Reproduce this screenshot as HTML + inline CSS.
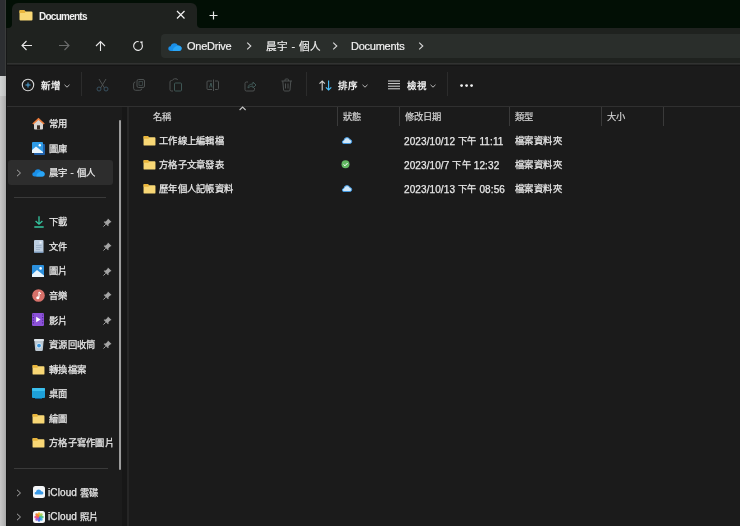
<!DOCTYPE html>
<html lang="zh-TW">
<head>
<meta charset="utf-8">
<style>
*{margin:0;padding:0;box-sizing:border-box}
html,body{-webkit-font-smoothing:antialiased;width:740px;height:526px;overflow:hidden;background:#1b1b1b;font-family:"Liberation Sans",sans-serif;color:#fff}
.a{position:absolute}
svg{position:absolute;overflow:visible}
.t{position:absolute;white-space:nowrap;line-height:20px;will-change:transform}
#strip{left:0;top:76px;width:6px;height:450px;background:linear-gradient(to right,#c8c8c8,#b4b4b4 70%,#a6a6a6)}
#striphi{left:0;top:76px;width:6px;height:20px;background:linear-gradient(to right,#d2d4d4,#c4c6c6 70%,#b8b8b8)}
#striptop{left:0;top:0;width:5px;height:76px;background:#2c2e31}
#striptopline{left:5px;top:0;width:1px;height:76px;background:#3a3c3b}
#border{left:6px;top:0;width:1px;height:526px;background:#161717}
#title{left:6px;top:0;width:734px;height:28px;background:#020f05}
#nav{left:7px;top:28px;width:733px;height:36px;background:#1f221f}
#tab{left:12px;top:3px;width:185px;height:26px;background:#1f221f;border-radius:6px 6px 0 0}
#addr{left:161px;top:34px;width:600px;height:24px;background:#2a2e2b;border-radius:4px}
#navline{left:7px;top:63px;width:733px;height:3px;background:linear-gradient(#313231 0,#313231 33%,#262726 33%,#262726 66%,#151515 66%)}
#tool{left:7px;top:66px;width:733px;height:40px;background:#1b1b1b}
#toolline{left:7px;top:106px;width:733px;height:1px;background:#303030}
#side{left:7px;top:107px;width:120px;height:419px;background:#1c1c1c}
#sideline{left:127px;top:107px;width:2px;height:419px;background:#262626}
#sidedark{left:122px;top:107px;width:5px;height:419px;background:#171717}
.sep{position:absolute;width:1px;top:72px;height:24px;background:#2c2c2c}
.col{position:absolute;top:107px;width:1px;height:19px;background:#3a3a3a}
.hd{color:#d4d4d4;font-size:9.3px;font-weight:500;-webkit-text-stroke:0.2px #d4d4d4}
.row{letter-spacing:0.3px;color:#e8e8e8;font-size:9.3px;font-weight:500;-webkit-text-stroke:0.25px #e8e8e8}
.num{font-size:10px;letter-spacing:0.1px}
.row .num{position:relative;top:1px}
.sb{letter-spacing:0.3px;color:#e8e8e8;font-size:9.3px;font-weight:500;-webkit-text-stroke:0.25px #e8e8e8}
.tb{color:#f0f0f0;font-size:9.5px;font-weight:bold}
.ad{color:#f0f0f0;font-size:11px;letter-spacing:-0.25px;-webkit-text-stroke:0.2px #f0f0f0}
</style>
</head>
<body>
<div class="a" id="strip"></div>
<div class="a" id="striphi"></div>
<div class="a" id="striptop"></div>
<div class="a" id="striptopline"></div>
<div class="a" id="border"></div>
<div class="a" id="title"></div>
<div class="a" id="nav"></div>
<div class="a" id="tab"></div>
<!-- tab flares -->
<svg style="left:8px;top:24px" width="4" height="4"><path d="M4 0 L4 4 L0 4 A4 4 0 0 0 4 0Z" fill="#1f221f"/></svg>
<svg style="left:197px;top:24px" width="4" height="4"><path d="M0 0 L0 4 L4 4 A4 4 0 0 1 0 0Z" fill="#1f221f"/></svg>
<div class="a" id="addr"></div>
<div class="a" id="navline"></div>
<div class="a" id="tool"></div>
<div class="a" id="toolline"></div>
<div class="a" id="side"></div>
<div class="a" id="sidedark"></div>
<div class="a" id="sideline"></div>

<!-- tab content -->
<svg style="left:19px;top:9px" width="14" height="12" viewBox="0 0 14 12">
  <path d="M0.5 2 Q0.5 1 1.5 1 L5 1 L6.5 2.5 L12.5 2.5 Q13.5 2.5 13.5 3.5 L13.5 10.5 Q13.5 11.5 12.5 11.5 L1.5 11.5 Q0.5 11.5 0.5 10.5Z" fill="#f8d775"/>
  <path d="M0.5 2 Q0.5 1 1.5 1 L5 1 L6.5 2.5 L6 4 L0.5 4Z" fill="#e9b53c"/>
</svg>
<div class="t tb" style="left:39px;top:6.5px;font-size:10px;letter-spacing:-0.75px">Documents</div>
<svg style="left:176px;top:10px" width="10" height="10" viewBox="0 0 10 10"><path d="M1 1 L8.5 8.5 M8.5 1 L1 8.5" stroke="#f2f2f2" stroke-width="1.2"/></svg>
<svg style="left:209px;top:11px" width="10" height="10" viewBox="0 0 10 10"><path d="M4.5 0.5 V8.5 M0.5 4.5 H8.5" stroke="#e8e8e8" stroke-width="1.2"/></svg>

<!-- nav buttons -->
<svg style="left:21px;top:40px" width="12" height="12" viewBox="0 0 12 12"><path d="M11 5.5 H1.5 M5.5 1 L1 5.5 L5.5 10" stroke="#e8e8e8" stroke-width="1.1" fill="none"/></svg>
<svg style="left:58px;top:40px" width="12" height="12" viewBox="0 0 12 12"><path d="M1 5.5 H10.5 M6.5 1 L11 5.5 L6.5 10" stroke="#6a6c6b" stroke-width="1.1" fill="none"/></svg>
<svg style="left:95px;top:40px" width="12" height="12" viewBox="0 0 12 12"><path d="M5.5 11 V1.5 M1 6 L5.5 1.5 L10 6" stroke="#e8e8e8" stroke-width="1.1" fill="none"/></svg>
<svg style="left:132px;top:40px" width="12" height="12" viewBox="0 0 12 12"><path d="M6.6 1.6 A4.4 4.4 0 1 0 9.9 3.9" stroke="#e8e8e8" stroke-width="1.1" fill="none"/><path d="M7.6 1.8 L10.6 1.2 L10.4 4.4Z" fill="#e8e8e8"/></svg>

<!-- address -->
<svg style="left:168px;top:41.5px" width="14" height="9.4" viewBox="0 0 15 10"><path d="M3.2 9.5 Q0.3 9.5 0.3 7 Q0.3 4.7 2.8 4.6 Q3.6 1.2 7 1.2 Q9.6 1.2 10.6 3.6 Q14.6 3.8 14.6 7 Q14.6 9.5 12 9.5Z" fill="#1a8fe8"/><path d="M5 9.5 Q5 5.5 10.6 3.6 Q14.6 3.8 14.6 7 Q14.6 9.5 12 9.5Z" fill="#2aa6f6"/></svg>
<div class="t ad" style="left:187px;top:36px">OneDrive</div>
<svg style="left:246px;top:42px" width="6" height="8" viewBox="0 0 6 8"><path d="M1.2 0.6 L4.8 4 L1.2 7.4" stroke="#d8d8d8" stroke-width="1.1" fill="none"/></svg>
<div class="t ad" style="left:266px;top:36px;font-size:10.6px;letter-spacing:0;word-spacing:0.6px">晨宇 - 個人</div>
<svg style="left:332px;top:42px" width="6" height="8" viewBox="0 0 6 8"><path d="M1.2 0.6 L4.8 4 L1.2 7.4" stroke="#d8d8d8" stroke-width="1.1" fill="none"/></svg>
<div class="t ad" style="left:351px;top:36px">Documents</div>
<svg style="left:418px;top:42px" width="6" height="8" viewBox="0 0 6 8"><path d="M1.2 0.6 L4.8 4 L1.2 7.4" stroke="#d8d8d8" stroke-width="1.1" fill="none"/></svg>

<!-- toolbar -->
<svg style="left:21px;top:78px" width="14" height="14" viewBox="0 0 14 14"><circle cx="7" cy="7" r="5.7" stroke="#d8d8d8" stroke-width="1.1" fill="none"/><path d="M7 4.5 V9.5 M4.5 7 H9.5" stroke="#4ea6dc" stroke-width="1"/></svg>
<div class="t tb" style="left:41px;top:76px;font-size:9.5px">新增</div>
<svg style="left:64px;top:84px" width="6" height="4" viewBox="0 0 6 4"><path d="M0.5 0.8 L3 3.2 L5.5 0.8" stroke="#c8c8c8" stroke-width="0.9" fill="none"/></svg>
<div class="sep" style="left:81px"></div>
<!-- cut -->
<svg style="left:96px;top:78px" width="13" height="14" viewBox="0 0 13 14"><path d="M3 1 L8.5 10 M10 1 L4.5 10" stroke="#4d5151" stroke-width="1" fill="none"/><circle cx="3" cy="11" r="2" stroke="#38505f" stroke-width="1" fill="none"/><circle cx="10" cy="11" r="2" stroke="#38505f" stroke-width="1" fill="none"/></svg>
<!-- copy -->
<svg style="left:133px;top:79px" width="13" height="12" viewBox="0 0 13 12"><rect x="4" y="0.5" width="7.5" height="8" rx="1.5" stroke="#4d5151" stroke-width="1" fill="none"/><rect x="6" y="2.5" width="3.5" height="4" stroke="#3f4a4a" stroke-width="0.8" fill="none"/><path d="M2.3 3 Q0.6 3 0.6 5 L0.6 9.2 Q0.6 11.3 2.7 11.3 L6.8 11.3 Q8.8 11.3 8.8 9.6" stroke="#4d5151" stroke-width="1" fill="none"/></svg>
<!-- paste -->
<svg style="left:169px;top:78px" width="14" height="14" viewBox="0 0 14 14"><path d="M3.5 2.5 L2.5 2.5 Q1 2.5 1 4 L1 11.5 Q1 13 2.5 13 L4 13 M4 2 Q4 0.8 5.5 0.8 L7 0.8 Q8.5 0.8 8.5 2" stroke="#4d5151" stroke-width="1" fill="none"/><rect x="5.5" y="5" width="7" height="8" rx="1" stroke="#3e5654" stroke-width="1" fill="none"/></svg>
<!-- rename -->
<svg style="left:206px;top:79px" width="14" height="13" viewBox="0 0 14 13"><path d="M6 2 L2 2 Q1 2 1 3 L1 9.5 Q1 10.5 2 10.5 L6 10.5 M9 2 L11.5 2 Q12.5 2 12.5 3 L12.5 9.5 Q12.5 10.5 11.5 10.5 L9 10.5 M7.5 0.5 V12" stroke="#4d5151" stroke-width="1" fill="none"/><path d="M3.5 8.5 L5 4 L6 8.5" stroke="#3e5654" stroke-width="1" fill="none"/></svg>
<!-- share -->
<svg style="left:244px;top:80px" width="13" height="12" viewBox="0 0 13 12"><path d="M4 2 L2.5 2 Q1 2 1 3.5 L1 9.5 Q1 11 2.5 11 L9 11 Q10.5 11 10.5 9.5 L10.5 8" stroke="#4d5151" stroke-width="1" fill="none"/><path d="M4 8 Q4 4 9 4 L9 2 L12 5 L9 8 L9 6 Q6 6 4 8Z" stroke="#3e5654" stroke-width="1" fill="none"/></svg>
<!-- delete -->
<svg style="left:281px;top:78px" width="12" height="14" viewBox="0 0 12 14"><path d="M0.5 3 H11 M4 3 V1.8 Q4 1 5 1 L6.5 1 Q7.5 1 7.5 1.8 V3 M1.8 3 L2.6 12 Q2.7 13 3.7 13 L7.9 13 Q8.9 13 9 12 L9.8 3 M4.5 5.5 V10.5 M7 5.5 V10.5" stroke="#4d5151" stroke-width="1" fill="none"/></svg>
<div class="sep" style="left:306px"></div>
<!-- sort -->
<svg style="left:319px;top:80px" width="14" height="11" viewBox="0 0 14 11"><path d="M3.2 10.5 V1 M0.5 3.7 L3.2 1 L5.9 3.7" stroke="#d0d0d0" stroke-width="1.1" fill="none"/><path d="M9.6 0.5 V10 M6.9 7.3 L9.6 10 L12.3 7.3" stroke="#4cc2ff" stroke-width="1.1" fill="none"/></svg>
<div class="t tb" style="left:338px;top:76px;font-size:9.5px">排序</div>
<svg style="left:362px;top:84px" width="6" height="4" viewBox="0 0 6 4"><path d="M0.5 0.8 L3 3.2 L5.5 0.8" stroke="#c8c8c8" stroke-width="0.9" fill="none"/></svg>
<!-- view -->
<svg style="left:388px;top:80px" width="13" height="10" viewBox="0 0 13 10"><path d="M0 1 H12 M0 3.6 H12 M0 6.2 H12 M0 8.8 H12" stroke="#d8d8d8" stroke-width="1"/></svg>
<div class="t tb" style="left:407px;top:76px;font-size:9.5px">檢視</div>
<svg style="left:430px;top:84px" width="6" height="4" viewBox="0 0 6 4"><path d="M0.5 0.8 L3 3.2 L5.5 0.8" stroke="#c8c8c8" stroke-width="0.9" fill="none"/></svg>
<div class="sep" style="left:447px"></div>
<svg style="left:460px;top:84px" width="14" height="4" viewBox="0 0 14 4"><circle cx="1.6" cy="1.6" r="1.4" fill="#f0f0f0"/><circle cx="6.6" cy="1.6" r="1.4" fill="#f0f0f0"/><circle cx="11.6" cy="1.6" r="1.4" fill="#f0f0f0"/></svg>

<!-- sidebar -->
<div class="a" style="left:8px;top:160px;width:105px;height:25px;background:#2d2d2d;border-radius:3px"></div>
<div class="a" style="left:14px;top:197px;width:92px;height:1px;background:#3a3a3a"></div>
<div class="a" style="left:14px;top:468px;width:94px;height:1px;background:#3a3a3a"></div>
<div class="a" style="left:119px;top:120px;width:2px;height:350px;background:#9c9c9c;border-radius:1px"></div>

<svg style="left:16px;top:169px" width="6" height="8" viewBox="0 0 6 8"><path d="M1 0.8 L4.5 4 L1 7.2" stroke="#a8a8a8" stroke-width="1" fill="none"/></svg>
<svg style="left:16px;top:489px" width="6" height="8" viewBox="0 0 6 8"><path d="M1 0.8 L4.5 4 L1 7.2" stroke="#a8a8a8" stroke-width="1" fill="none"/></svg>
<svg style="left:16px;top:513px" width="6" height="8" viewBox="0 0 6 8"><path d="M1 0.8 L4.5 4 L1 7.2" stroke="#a8a8a8" stroke-width="1" fill="none"/></svg>

<!-- home -->
<svg style="left:32px;top:117px" width="13" height="13" viewBox="0 0 13 13"><path d="M2 6 L2 11.5 Q2 12.5 3 12.5 L10 12.5 Q11 12.5 11 11.5 L11 6 L6.5 2Z" fill="#d8d4d0"/><path d="M0.3 6.6 L6.5 0.8 L12.7 6.6 L11.6 7.6 L6.5 3 L1.4 7.6Z" fill="#ee7d3b"/><rect x="5" y="8.3" width="3" height="4.2" fill="#3a2c24"/></svg>
<div class="t sb" style="left:49px;top:114px">常用</div>
<!-- gallery -->
<svg style="left:32px;top:142px" width="13" height="13" viewBox="0 0 13 13"><rect x="2" y="2" width="11" height="11" rx="1" fill="#1f5fa8"/><rect x="0" y="0" width="11" height="11" rx="1" fill="#2e9be6"/><path d="M0 11 L0 8 L4 4.5 L11 10 L11 11Z" fill="#e8f4fc"/><circle cx="7.8" cy="3.2" r="1.2" fill="#fff"/></svg>
<div class="t sb" style="left:49px;top:139px">圖庫</div>
<!-- onedrive -->
<svg style="left:32px;top:168px" width="13" height="9" viewBox="0 0 15 10"><path d="M3.2 9.5 Q0.3 9.5 0.3 7 Q0.3 4.7 2.8 4.6 Q3.6 1.2 7 1.2 Q9.6 1.2 10.6 3.6 Q14.6 3.8 14.6 7 Q14.6 9.5 12 9.5Z" fill="#1a8fe8"/><path d="M5 9.5 Q5 5.5 10.6 3.6 Q14.6 3.8 14.6 7 Q14.6 9.5 12 9.5Z" fill="#2aa6f6"/></svg>
<div class="t sb" style="left:49px;top:163px">晨宇 - 個人</div>

<!-- download -->
<svg style="left:34px;top:216px" width="10" height="12" viewBox="0 0 10 12"><path d="M5 0.3 V8.2 M1.6 5 L5 8.2 L8.4 5 M0.3 11 H9.7" stroke="#35c6a0" stroke-width="1.3" fill="none"/></svg>
<div class="t sb" style="left:49px;top:212px">下載</div>
<!-- documents -->
<svg style="left:34px;top:240px" width="10" height="13" viewBox="0 0 10 13"><rect x="0" y="0" width="9.5" height="12.8" rx="1" fill="#bccde0"/><rect x="0" y="11.6" width="9.5" height="1.2" fill="#6f8fb5"/><path d="M2 5.5 H7.5 M2 7.5 H7.5 M2 9.5 H6" stroke="#93a9c2" stroke-width="0.7"/><rect x="5.5" y="1.5" width="2" height="2" fill="#eef4fa"/></svg>
<div class="t sb" style="left:49px;top:237px">文件</div>
<!-- pictures -->
<svg style="left:32px;top:265px" width="12" height="12" viewBox="0 0 12 12"><rect x="0" y="0" width="12" height="12" rx="1" fill="#2b8fdc"/><path d="M0 12 L0 9.5 L5 5 L12 10.5 L12 12Z" fill="#e8f4fc"/><circle cx="8.6" cy="3.4" r="1.3" fill="#fff"/></svg>
<div class="t sb" style="left:49px;top:261px">圖片</div>
<!-- music -->
<svg style="left:32px;top:289px" width="13" height="13" viewBox="0 0 13 13"><circle cx="6.5" cy="6.5" r="6.3" fill="#d7716a"/><path d="M7 3 V8.5" stroke="#fff" stroke-width="1.1"/><circle cx="5.8" cy="8.8" r="1.5" fill="#fff"/><path d="M7 3 Q8.5 3.5 8.8 5" stroke="#fff" stroke-width="1" fill="none"/></svg>
<div class="t sb" style="left:49px;top:286px">音樂</div>
<!-- videos -->
<svg style="left:32px;top:313px" width="12" height="13" viewBox="0 0 12 13"><rect x="0" y="0" width="12" height="13" rx="1.2" fill="#8c52d8"/><path d="M1.3 1.5 V12 M10.7 1.5 V12" stroke="#4a2090" stroke-width="1.1" stroke-dasharray="1.1 1.5"/><path d="M4.2 3.8 L8.6 6.5 L4.2 9.2Z" fill="#fff"/></svg>
<div class="t sb" style="left:49px;top:311px">影片</div>
<!-- recycle -->
<svg style="left:34px;top:339px" width="10" height="12" viewBox="0 0 10 12"><path d="M0.3 1 H9.7 L8.8 11 Q8.7 12 7.7 12 L2.3 12 Q1.3 12 1.2 11Z" fill="#bcc8d2"/><rect x="0" y="0" width="10" height="2" rx="0.8" fill="#dfe6ec"/><circle cx="5" cy="6.6" r="2.6" fill="#d8ecfa"/><circle cx="5" cy="6.6" r="1.9" fill="#3a94dc"/></svg>
<div class="t sb" style="left:49px;top:335px">資源回收筒</div>
<!-- pins -->
<svg style="left:103px;top:218px" width="9" height="9" viewBox="0 0 10 10"><path d="M5.5 0.5 L9.5 4.5 L8 5 L6 7 L6.2 8.6 L5.6 9.2 L0.8 4.4 L1.4 3.8 L3 4 L5 2Z" fill="#a4a4a4"/><path d="M3 7 L0.5 9.5" stroke="#a4a4a4" stroke-width="1.1"/></svg>
<svg style="left:103px;top:242px" width="9" height="9" viewBox="0 0 10 10"><path d="M5.5 0.5 L9.5 4.5 L8 5 L6 7 L6.2 8.6 L5.6 9.2 L0.8 4.4 L1.4 3.8 L3 4 L5 2Z" fill="#a4a4a4"/><path d="M3 7 L0.5 9.5" stroke="#a4a4a4" stroke-width="1.1"/></svg>
<svg style="left:103px;top:267px" width="9" height="9" viewBox="0 0 10 10"><path d="M5.5 0.5 L9.5 4.5 L8 5 L6 7 L6.2 8.6 L5.6 9.2 L0.8 4.4 L1.4 3.8 L3 4 L5 2Z" fill="#a4a4a4"/><path d="M3 7 L0.5 9.5" stroke="#a4a4a4" stroke-width="1.1"/></svg>
<svg style="left:103px;top:291px" width="9" height="9" viewBox="0 0 10 10"><path d="M5.5 0.5 L9.5 4.5 L8 5 L6 7 L6.2 8.6 L5.6 9.2 L0.8 4.4 L1.4 3.8 L3 4 L5 2Z" fill="#a4a4a4"/><path d="M3 7 L0.5 9.5" stroke="#a4a4a4" stroke-width="1.1"/></svg>
<svg style="left:103px;top:316px" width="9" height="9" viewBox="0 0 10 10"><path d="M5.5 0.5 L9.5 4.5 L8 5 L6 7 L6.2 8.6 L5.6 9.2 L0.8 4.4 L1.4 3.8 L3 4 L5 2Z" fill="#a4a4a4"/><path d="M3 7 L0.5 9.5" stroke="#a4a4a4" stroke-width="1.1"/></svg>
<svg style="left:103px;top:340px" width="9" height="9" viewBox="0 0 10 10"><path d="M5.5 0.5 L9.5 4.5 L8 5 L6 7 L6.2 8.6 L5.6 9.2 L0.8 4.4 L1.4 3.8 L3 4 L5 2Z" fill="#a4a4a4"/><path d="M3 7 L0.5 9.5" stroke="#a4a4a4" stroke-width="1.1"/></svg>

<!-- folders sidebar -->
<svg style="left:32px;top:364px" width="13" height="11" viewBox="0 0 14 12"><path d="M0.5 2 Q0.5 1 1.5 1 L5 1 L6.5 2.5 L12.5 2.5 Q13.5 2.5 13.5 3.5 L13.5 10.5 Q13.5 11.5 12.5 11.5 L1.5 11.5 Q0.5 11.5 0.5 10.5Z" fill="#f8d775"/><path d="M0.5 2 Q0.5 1 1.5 1 L5 1 L6.5 2.5 L6 4 L0.5 4Z" fill="#e9b53c"/></svg>
<div class="t sb" style="left:49px;top:360px">轉換檔案</div>
<svg style="left:32px;top:388px" width="13" height="11" viewBox="0 0 13 11"><rect x="0" y="0" width="13" height="10" rx="1" fill="#1ea0d8"/><rect x="0" y="0" width="13" height="3" rx="1" fill="#3cc0ee"/><rect x="3" y="10" width="7" height="1" fill="#0f5f90"/></svg>
<div class="t sb" style="left:49px;top:384px">桌面</div>
<svg style="left:32px;top:413px" width="13" height="11" viewBox="0 0 14 12"><path d="M0.5 2 Q0.5 1 1.5 1 L5 1 L6.5 2.5 L12.5 2.5 Q13.5 2.5 13.5 3.5 L13.5 10.5 Q13.5 11.5 12.5 11.5 L1.5 11.5 Q0.5 11.5 0.5 10.5Z" fill="#f8d775"/><path d="M0.5 2 Q0.5 1 1.5 1 L5 1 L6.5 2.5 L6 4 L0.5 4Z" fill="#e9b53c"/></svg>
<div class="t sb" style="left:49px;top:409px">繪圖</div>
<svg style="left:32px;top:437px" width="13" height="11" viewBox="0 0 14 12"><path d="M0.5 2 Q0.5 1 1.5 1 L5 1 L6.5 2.5 L12.5 2.5 Q13.5 2.5 13.5 3.5 L13.5 10.5 Q13.5 11.5 12.5 11.5 L1.5 11.5 Q0.5 11.5 0.5 10.5Z" fill="#f8d775"/><path d="M0.5 2 Q0.5 1 1.5 1 L5 1 L6.5 2.5 L6 4 L0.5 4Z" fill="#e9b53c"/></svg>
<div class="t sb" style="left:49px;top:433px">方格子寫作圖片</div>

<!-- icloud -->
<svg style="left:33px;top:486px" width="12" height="12" viewBox="0 0 12 12"><rect x="0" y="0" width="12" height="12" rx="2.5" fill="#f4f6f8"/><path d="M3 8.6 Q1.6 8.6 1.6 7.3 Q1.6 6.1 2.9 6 Q3.4 3.6 5.8 3.6 Q7.6 3.6 8.3 5.2 Q10.4 5.3 10.4 7 Q10.4 8.6 8.8 8.6Z" fill="#3b9be8"/></svg>
<div class="t sb" style="left:48px;top:483px"><span class="num">iCloud</span> 雲碟</div>
<svg style="left:33px;top:511px" width="12" height="12" viewBox="0 0 12 12"><rect x="0" y="0" width="12" height="12" rx="2.5" fill="#f4f6f8"/><ellipse cx="6" cy="3.6" rx="1.5" ry="2.4" fill="#f5b52a" opacity="0.9" transform="rotate(0 6 6)"/><ellipse cx="6" cy="3.6" rx="1.5" ry="2.4" fill="#a6d04a" opacity="0.9" transform="rotate(45 6 6)"/><ellipse cx="6" cy="3.6" rx="1.5" ry="2.4" fill="#4cc07a" opacity="0.9" transform="rotate(90 6 6)"/><ellipse cx="6" cy="3.6" rx="1.5" ry="2.4" fill="#3ab0e0" opacity="0.9" transform="rotate(135 6 6)"/><ellipse cx="6" cy="3.6" rx="1.5" ry="2.4" fill="#3a6ee8" opacity="0.9" transform="rotate(180 6 6)"/><ellipse cx="6" cy="3.6" rx="1.5" ry="2.4" fill="#9a5ad8" opacity="0.9" transform="rotate(225 6 6)"/><ellipse cx="6" cy="3.6" rx="1.5" ry="2.4" fill="#e84a8a" opacity="0.9" transform="rotate(270 6 6)"/><ellipse cx="6" cy="3.6" rx="1.5" ry="2.4" fill="#f07a2a" opacity="0.9" transform="rotate(315 6 6)"/></svg>
<div class="t sb" style="left:48px;top:507px"><span class="num">iCloud</span> 照片</div>

<!-- column headers -->
<svg style="left:239px;top:106px" width="8" height="5" viewBox="0 0 8 5"><path d="M0.6 4 L3.6 1 L6.6 4" stroke="#c4c4c4" stroke-width="1.1" fill="none"/></svg>
<div class="col" style="left:337px"></div>
<div class="col" style="left:399px"></div>
<div class="col" style="left:509px"></div>
<div class="col" style="left:601px"></div>
<div class="col" style="left:663px"></div>
<div class="t hd" style="left:153px;top:107px">名稱</div>
<div class="t hd" style="left:343px;top:107px">狀態</div>
<div class="t hd" style="left:405px;top:107px">修改日期</div>
<div class="t hd" style="left:515px;top:107px">類型</div>
<div class="t hd" style="left:607px;top:107px">大小</div>

<!-- rows -->
<svg style="left:143px;top:135px" width="13" height="11" viewBox="0 0 14 12"><path d="M0.5 2 Q0.5 1 1.5 1 L5 1 L6.5 2.5 L12.5 2.5 Q13.5 2.5 13.5 3.5 L13.5 10.5 Q13.5 11.5 12.5 11.5 L1.5 11.5 Q0.5 11.5 0.5 10.5Z" fill="#f8d775"/><path d="M0.5 2 Q0.5 1 1.5 1 L5 1 L6.5 2.5 L6 4 L0.5 4Z" fill="#e9b53c"/></svg>
<svg style="left:143px;top:159px" width="13" height="11" viewBox="0 0 14 12"><path d="M0.5 2 Q0.5 1 1.5 1 L5 1 L6.5 2.5 L12.5 2.5 Q13.5 2.5 13.5 3.5 L13.5 10.5 Q13.5 11.5 12.5 11.5 L1.5 11.5 Q0.5 11.5 0.5 10.5Z" fill="#f8d775"/><path d="M0.5 2 Q0.5 1 1.5 1 L5 1 L6.5 2.5 L6 4 L0.5 4Z" fill="#e9b53c"/></svg>
<svg style="left:143px;top:183px" width="13" height="11" viewBox="0 0 14 12"><path d="M0.5 2 Q0.5 1 1.5 1 L5 1 L6.5 2.5 L12.5 2.5 Q13.5 2.5 13.5 3.5 L13.5 10.5 Q13.5 11.5 12.5 11.5 L1.5 11.5 Q0.5 11.5 0.5 10.5Z" fill="#f8d775"/><path d="M0.5 2 Q0.5 1 1.5 1 L5 1 L6.5 2.5 L6 4 L0.5 4Z" fill="#e9b53c"/></svg>
<div class="t row" style="left:159px;top:131px">工作線上編輯檔</div>
<div class="t row" style="left:159px;top:155px">方格子文章發表</div>
<div class="t row" style="left:159px;top:179px">歷年個人記帳資料</div>

<svg style="left:342px;top:137px" width="10" height="7" viewBox="0 0 10 7"><path d="M2 6.5 Q0.3 6.5 0.3 5 Q0.3 3.6 1.8 3.5 Q2.3 0.6 5 0.6 Q7.2 0.6 7.8 2.6 Q9.7 2.7 9.7 4.6 Q9.7 6.5 7.8 6.5Z" fill="#cfe6f8" stroke="#3a9ae8" stroke-width="0.9"/></svg>
<svg style="left:341px;top:160px" width="10" height="9" viewBox="0 0 10 9"><circle cx="4.5" cy="4.3" r="4" fill="#62b862"/><path d="M2.5 4.4 L4 5.8 L6.6 3" stroke="#fff" stroke-width="1" fill="none"/></svg>
<svg style="left:342px;top:185px" width="10" height="7" viewBox="0 0 10 7"><path d="M2 6.5 Q0.3 6.5 0.3 5 Q0.3 3.6 1.8 3.5 Q2.3 0.6 5 0.6 Q7.2 0.6 7.8 2.6 Q9.7 2.7 9.7 4.6 Q9.7 6.5 7.8 6.5Z" fill="#cfe6f8" stroke="#3a9ae8" stroke-width="0.9"/></svg>

<div class="t row" style="left:404px;top:131px"><span class="num">2023/10/12</span> 下午 <span class="num">11:11</span></div>
<div class="t row" style="left:404px;top:155px"><span class="num">2023/10/7</span> 下午 <span class="num">12:32</span></div>
<div class="t row" style="left:404px;top:179px"><span class="num">2023/10/13</span> 下午 <span class="num">08:56</span></div>
<div class="t row" style="left:515px;top:131px;letter-spacing:0.45px">檔案資料夾</div>
<div class="t row" style="left:515px;top:155px;letter-spacing:0.45px">檔案資料夾</div>
<div class="t row" style="left:515px;top:179px;letter-spacing:0.45px">檔案資料夾</div>

</body>
</html>
